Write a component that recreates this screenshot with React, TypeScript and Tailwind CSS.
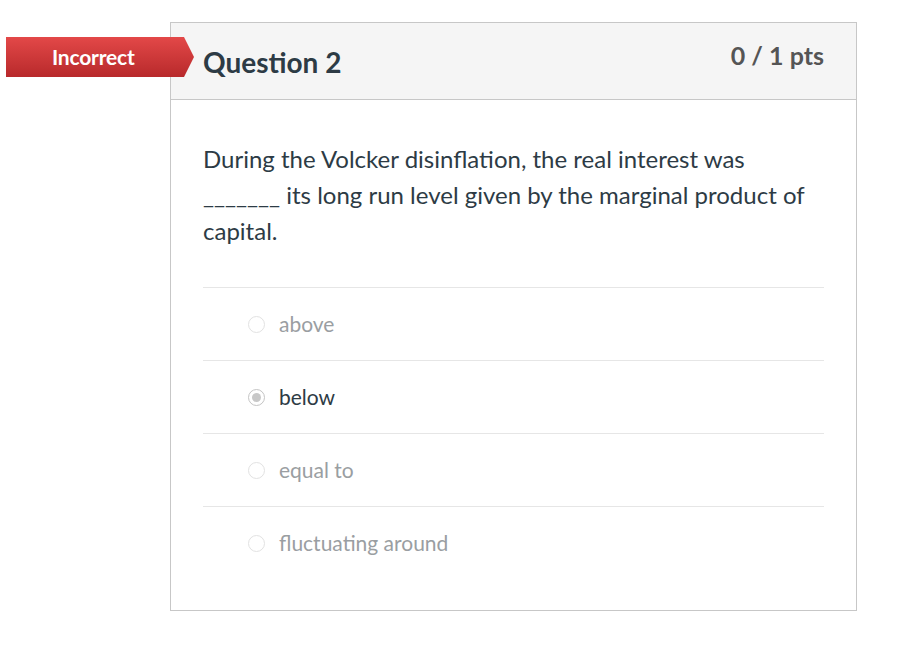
import React from 'react';

const answers = [
  { text: 'above', selected: false },
  { text: 'below', selected: true },
  { text: 'equal to', selected: false },
  { text: 'fluctuating around', selected: false },
];

function Radio({ selected }: { selected: boolean }) {
  if (selected) {
    return (
      <span className="flex h-[17px] w-[17px] shrink-0 items-center justify-center rounded-full border border-[#c4c4c4] bg-white">
        <span className="h-[9px] w-[9px] rounded-full bg-[#c8c8c8]" />
      </span>
    );
  }
  return <span className="h-[17px] w-[17px] shrink-0 rounded-full border border-[#e2e2e2] bg-white" />;
}

export default function App() {
  return (
    <div className="min-h-screen bg-white pt-[22px] font-['Lato','Open_Sans',sans-serif]">
      <div className="relative ml-[170px] w-[687px] border border-[#c7c7c7] bg-white">
        <div
          className="absolute left-[-165px] top-[14px] flex h-[40px] w-[188px] items-center bg-gradient-to-b from-[#e34848] to-[#b8292b] pl-[46px] shadow-[0_1px_2px_rgba(0,0,0,0.35)]"
          style={{ clipPath: 'polygon(0 0, 178px 0, 188px 20px, 178px 40px, 0 40px)' }}
        >
          <span className="text-[21px] font-bold tracking-[-0.2px] text-white">Incorrect</span>
        </div>

        <div className="flex h-[77px] items-start justify-between border-b border-[#c7c7c7] bg-[#f5f5f5] px-[32px]">
          <h2 className="pt-[22px] text-[28px] font-bold leading-[34px] text-[#2d3b45]">Question 2</h2>
          <div className="pt-[16px] text-[25px] font-bold leading-[32px] text-[#555]">0 / 1 pts</div>
        </div>

        <div className="px-[32px] pb-[31px] pt-[41px]">
          <p className="text-[24px] leading-[36px] text-[#2d3b45]">
            During the Volcker disinflation, the real interest was _______ its long run level given by the marginal
            product of capital.
          </p>
          <div className="mt-[38px]">
            {answers.map((a) => (
              <div key={a.text} className="flex h-[73px] items-center gap-[14px] border-t border-[#e6e6e6] pl-[45px]">
                <Radio selected={a.selected} />
                <span className={`text-[21px] ${a.selected ? 'text-[#2d3b45]' : 'text-[#9a9ea2]'}`}>{a.text}</span>
              </div>
            ))}
          </div>
        </div>
      </div>
    </div>
  );
}
